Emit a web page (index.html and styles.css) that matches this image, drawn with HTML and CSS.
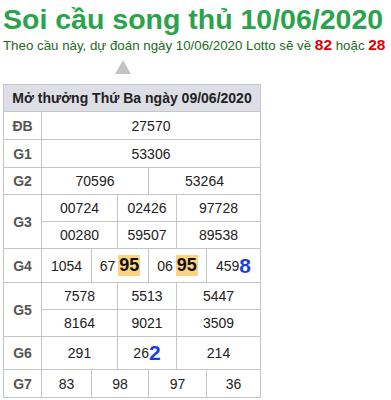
FILE: index.html
```html
<!DOCTYPE html>
<html lang="vi">
<head>
<meta charset="utf-8">
<link rel="stylesheet" href="styles.css">
</head>
<body>
<h1 class="title">Soi cầu song thủ 10/06/2020</h1>
<p class="sub">Theo cầu này, dự đoán ngày 10/06/2020 Lotto sẽ về <b class="red">82</b> hoặc <b class="red">28</b></p>
<div class="arrow-row"><span class="arrow"></span></div>
<div class="kq">
  <div class="head">Mở thưởng Thứ Ba ngày 09/06/2020</div>
  <div class="row h28"><div class="lbl">ĐB</div><div class="vals"><div class="sub-row c1"><div class="cell">27570</div></div></div></div>
  <div class="row h28"><div class="lbl">G1</div><div class="vals"><div class="sub-row c1"><div class="cell">53306</div></div></div></div>
  <div class="row h27"><div class="lbl">G2</div><div class="vals"><div class="sub-row c2"><div class="cell">70596</div><div class="cell">53264</div></div></div></div>
  <div class="row"><div class="lbl">G3</div><div class="vals">
    <div class="sub-row c3 h27"><div class="cell">00724</div><div class="cell">02426</div><div class="cell">97728</div></div>
    <div class="sub-row c3 h27"><div class="cell">00280</div><div class="cell">59507</div><div class="cell">89538</div></div>
  </div></div>
  <div class="row h34"><div class="lbl">G4</div><div class="vals"><div class="sub-row c4">
    <div class="cell">1054</div>
    <div class="cell">67<span class="hl">95</span></div>
    <div class="cell">06<span class="hl">95</span></div>
    <div class="cell">459<span class="blue">8</span></div>
  </div></div></div>
  <div class="row"><div class="lbl">G5</div><div class="vals">
    <div class="sub-row c3 h27"><div class="cell">7578</div><div class="cell">5513</div><div class="cell">5447</div></div>
    <div class="sub-row c3 h27"><div class="cell">8164</div><div class="cell">9021</div><div class="cell">3509</div></div>
  </div></div>
  <div class="row h33"><div class="lbl">G6</div><div class="vals"><div class="sub-row c3">
    <div class="cell">291</div><div class="cell">26<span class="blue">2</span></div><div class="cell">214</div>
  </div></div></div>
  <div class="row h28"><div class="lbl">G7</div><div class="vals"><div class="sub-row c4">
    <div class="cell">83</div><div class="cell">98</div><div class="cell">97</div><div class="cell">36</div>
  </div></div></div>
</div>
</body>
</html>
```
FILE: styles.css
```css
* { box-sizing: border-box; }
body {
  margin: 0;
  padding: 3px 0 0 3px;
  font-family: "Liberation Sans", Arial, sans-serif;
  background: #fff;
}
.title {
  margin: 0;
  font-size: 28.5px;
  line-height: 32px;
  font-weight: bold;
  color: #2ba24c;
}
.sub {
  margin: 2px 0 0;
  font-size: 13.3px;
  line-height: 16px;
  color: #216b21;
  white-space: nowrap;
}
.red { color: #e00000; font-size: 15.5px; }
.arrow-row {
  height: 30px;
  padding: 6px 0 0 112px;
}
.arrow {
  display: block;
  width: 0;
  height: 0;
  border-left: 8px solid transparent;
  border-right: 8px solid transparent;
  border-bottom: 14px solid #c4c4c4;
}
.kq {
  width: 258px;
  border-left: 1px solid #c6c6c6;
  border-top: 1px solid #c6c6c6;
  font-size: 14px;
  color: #222;
}
.head {
  height: 27px;
  background: #dedee6;
  border-right: 1px solid #c6c6c6;
  border-bottom: 1px solid #c6c6c6;
  font-weight: bold;
  color: #222;
  display: flex;
  align-items: center;
  justify-content: center;
}
.row { display: flex; }
.lbl {
  width: 38px;
  flex: none;
  border-right: 1px solid #c6c6c6;
  border-bottom: 1px solid #c6c6c6;
  font-weight: bold;
  color: #555;
  display: flex;
  align-items: center;
  justify-content: center;
}
.vals { flex: 1; display: flex; flex-direction: column; }
.sub-row { display: grid; flex: 1 0 auto; }
.c1 { grid-template-columns: 219px; }
.c2 { grid-template-columns: 107px 112px; }
.c3 { grid-template-columns: 76px 59px 84px; }
.c4 { grid-template-columns: 50px 57px 58px 54px; }
.cell {
  border-right: 1px solid #c6c6c6;
  border-bottom: 1px solid #c6c6c6;
  display: flex;
  align-items: center;
  justify-content: center;
  white-space: nowrap;
}
.h27 { height: 27px; }
.h28 { height: 28px; }
.h33 { height: 33px; }
.h34 { height: 34px; }
.hl {
  background: #fdd383;
  font-weight: bold;
  font-size: 18px;
  line-height: 21px;
  padding: 0 1px;
  margin-left: 3px;
  color: #111;
}
.blue {
  color: #1a3fe0;
  font-weight: bold;
  font-size: 21px;
  line-height: 22px;
}
```
